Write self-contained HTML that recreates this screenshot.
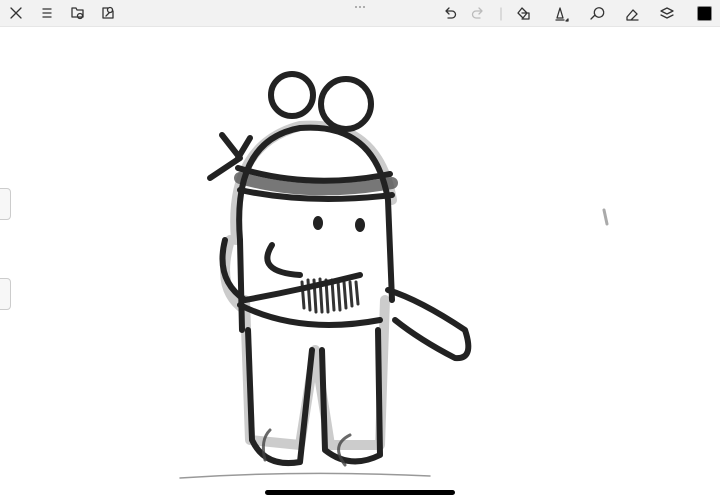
<!DOCTYPE html>
<html><head><style>
body{margin:0;width:720px;height:500px;background:#fff;overflow:hidden;position:relative;font-family:"Liberation Sans",sans-serif}
.tb{position:absolute;left:0;top:0;width:720px;height:26px;background:#f2f2f2;border-bottom:1px solid #e6e6e6}
.tab{position:absolute;left:-4px;width:13px;height:30px;border:1px solid #ccc;border-radius:4px;background:#f7f7f7}
</style></head><body>
<div class="tb">
<svg width="720" height="26" fill="none" stroke="#333" stroke-width="1.3" stroke-linecap="round" stroke-linejoin="round">
<path d="M11 8l10 10M21 8l-10 10"/>
<path d="M43 9h8M43 13h8M43 17h8"/>
<path d="M72 8h4l1 2h6v7h-11z"/><circle cx="80" cy="16" r="2.5"/>
<path d="M113 11v7h-10v-10h5"/><circle cx="110" cy="10" r="2.5"/><path d="M106 16l3-3"/>
<circle cx="356" cy="7" r="1" fill="#999" stroke="none"/><circle cx="360" cy="7" r="1" fill="#999" stroke="none"/><circle cx="364" cy="7" r="1" fill="#999" stroke="none"/>
<path d="M446 11h6a3.5 3.5 0 010 7h-4M446 11l3-3M446 11l3 3"/>
<path stroke="#bbb" d="M482 11h-6a3.5 3.5 0 000 7h4M482 11l-3-3M482 11l-3 3"/>
<path stroke="#ccc" d="M501 8v12"/>
<path d="M518 13l4-5 5 5-4 5zM522 13h7v6h-7"/>
<path d="M557 18l3-10 3 10z M556 20h8"/><path d="M566 21l2-2v2z" fill="#333"/>
<path d="M591 19l4-4M595 15a4 4 0 108-5 4 4 0 00-8 5z"/>
<path d="M627 17l6-7 4 4-6 6h-4zM628 20h10"/>
<path d="M661 11l6-3 6 3-6 3zM661 15l6 3 6-3"/>
</svg>
<div style="position:absolute;left:697px;top:6px;width:13px;height:13px;background:#000;border:1px solid #888;border-radius:2px"></div>
</div>
<div class="tab" style="top:188px"></div>
<div class="tab" style="top:278px"></div>
<svg width="720" height="500" style="position:absolute;left:0;top:0" fill="none" stroke-linecap="round" stroke-linejoin="round">
<g stroke="#aaa" stroke-width="10" opacity=".6">
<path d="M245 300 L250 440 L300 445 L315 350 L330 445 L380 445 L385 300"/>
<path d="M230 240 Q215 290 245 310"/>
<path d="M236 240 Q228 145 300 126 Q378 120 392 200"/>
</g>
<g stroke="#555" stroke-width="12" opacity=".8">
<path d="M240 178 Q310 198 392 183"/>
</g>
<g stroke="#333" stroke-width="3">
<path d="M302 282 L304 308 M308 280 L310 310 M314 280 L316 312 M320 279 L322 312 M326 280 L328 312 M332 280 L334 310 M338 281 L340 310 M344 282 L346 308 M350 282 L352 306 M356 282 L358 304"/>
</g>
<g stroke="#222" stroke-width="6">
<circle cx="292" cy="95" r="21"/>
<circle cx="346" cy="104" r="25"/>
<path d="M240 240 Q232 140 300 128 Q375 122 388 200 L392 300"/>
<path d="M240 240 L242 330 M240 305 Q300 335 380 320"/>
<path d="M238 168 Q310 190 390 174 M240 190 Q310 205 392 195"/>
<path d="M222 135 L240 158 L210 178 M238 158 L250 138"/>
<path d="M248 330 L252 440 Q265 468 300 462 L312 350 M322 350 L325 450 Q350 470 380 455 L378 330"/>
<path d="M388 290 Q420 300 465 330 Q475 360 455 358 Q420 340 395 320"/>
<path d="M225 240 Q215 280 245 300 Q300 290 360 275"/>
<path d="M272 245 Q255 272 300 275"/>
</g>
<g stroke="#444" stroke-width="3" opacity=".8">
<path d="M265 460 Q260 440 270 430 M345 465 Q330 445 350 435"/>
</g>
<ellipse cx="318" cy="223" rx="5" ry="7" fill="#222"/>
<ellipse cx="360" cy="225" rx="5" ry="7" fill="#222"/>
<path d="M180 478 Q300 470 430 476" stroke="#999" stroke-width="1.5"/>
<path d="M604 210 l3 14" stroke="#aaa" stroke-width="3"/>
<rect x="265" y="490" width="190" height="5" rx="2.5" fill="#000"/>
</svg>
</body></html>
